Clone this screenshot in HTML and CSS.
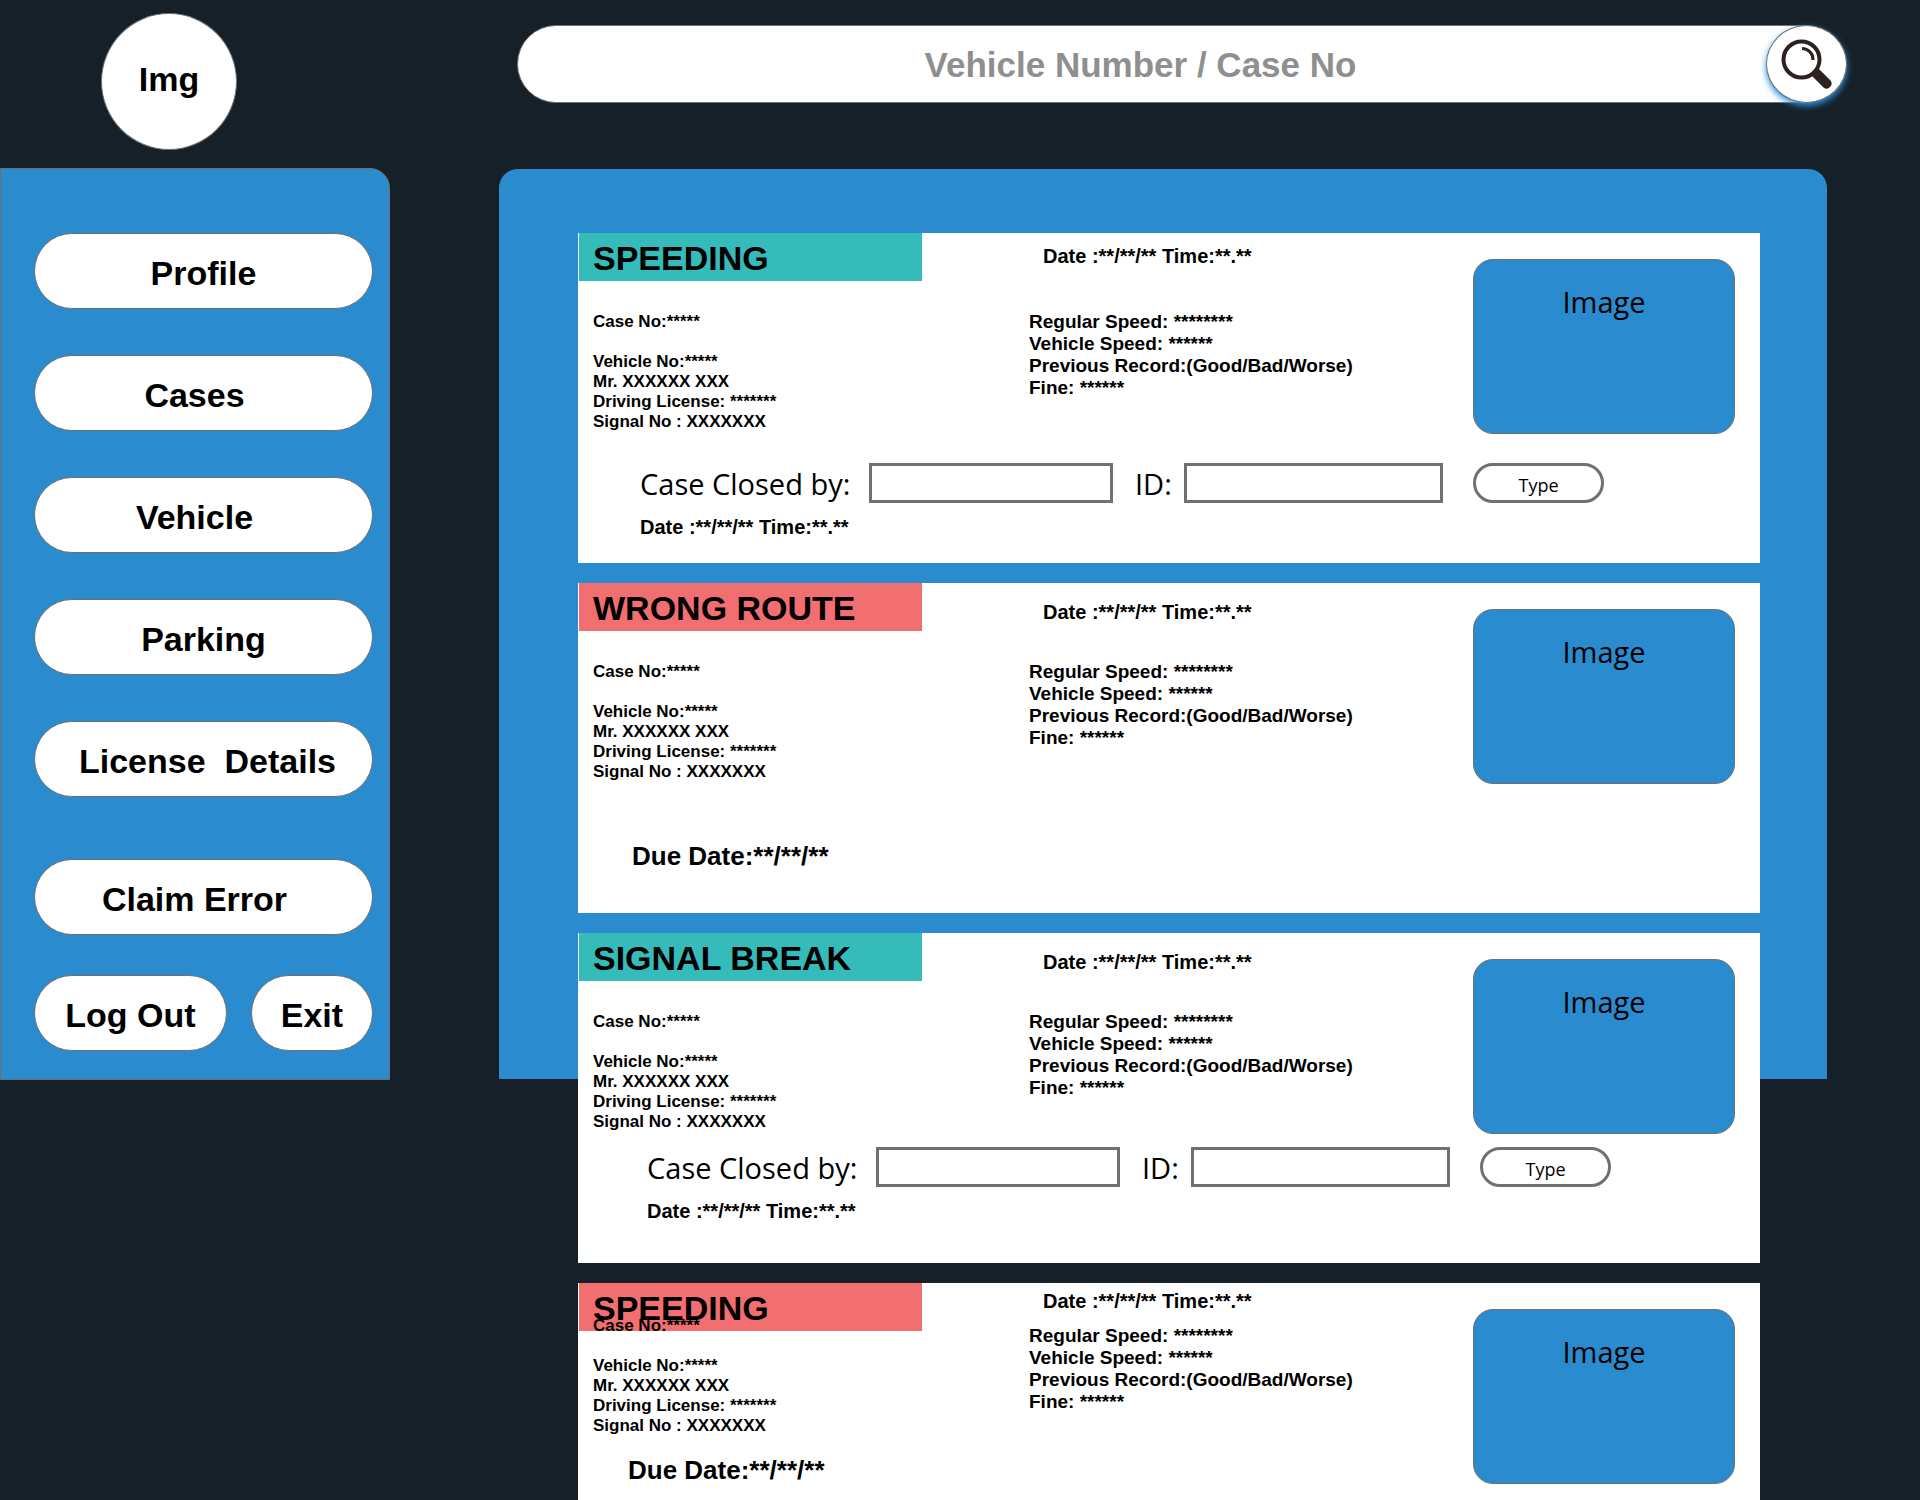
FILE: index.html
```html
<!DOCTYPE html>
<html lang="en">
<head>
<meta charset="utf-8">
<meta name="viewport" content="width=device-width, initial-scale=1">
<title>Traffic Cases</title>
<link rel="stylesheet" href="styles.css">
</head>
<body>
<div class="page">
  <header class="header">
    <div class="avatar">Img</div>
    <form class="search" role="search">
      <input class="search-input" type="search" aria-label="Vehicle Number / Case No" placeholder="Vehicle Number / Case No">
      <button class="search-button" type="button" aria-label="Search">
        <svg class="search-icon" viewBox="0 0 54 54" aria-hidden="true">
          <circle cx="21.500" cy="22.500" r="18" fill="none" stroke="#2d221f" stroke-width="4"/>
          <path d="M22 11.500A11 11 0 0 1 33 23" fill="none" stroke="#2d221f" stroke-width="3"/>
          <path d="M31 38 L38 31 L50.500 43.500 A5 5 0 0 1 43.500 50.500 Z" fill="#2d221f"/>
        </svg>
      </button>
    </form>
  </header>

  <div class="layout">
    <nav class="sidebar" aria-label="Main">
      <button class="pill" type="button">Profile</button>
      <button class="pill pill-left" type="button">Cases</button>
      <button class="pill pill-left" type="button">Vehicle</button>
      <button class="pill" type="button">Parking</button>
      <button class="pill pill-right" type="button">License&nbsp; Details</button>
      <div class="sidebar-foot">
        <button class="pill pill-left" type="button">Claim Error</button>
        <div class="pill-row">
          <button class="pill pill-wide" type="button">Log Out</button>
          <button class="pill pill-narrow" type="button">Exit</button>
        </div>
      </div>
    </nav>

    <main class="panel">
      <article class="card">
        <div class="case">
          <h2 class="tag tag-closed">SPEEDING</h2>
          <div class="details">
            <p class="case-no">Case No:*****</p>
            <p>Vehicle No:*****</p>
            <p>Mr. XXXXXX XXX</p>
            <p>Driving License: *******</p>
            <p>Signal No : XXXXXXX</p>
          </div>
        </div>
        <div class="record">
          <p class="stamp">Date :**/**/** Time:**.**</p>
          <div class="speeds">
            <p>Regular Speed: ********</p>
            <p>Vehicle Speed: ******</p>
            <p>Previous Record:(Good/Bad/Worse)</p>
            <p>Fine: ******</p>
          </div>
        </div>
        <div class="photo">Image</div>
        <div class="closing">
          <label class="field-label" for="closed-by-1">Case Closed by:</label>
          <input class="field" id="closed-by-1" type="text">
          <label class="field-label field-label-id" for="closed-id-1">ID:</label>
          <input class="field" id="closed-id-1" type="text">
          <button class="type" type="button">Type</button>
          <p class="closing-date">Date :**/**/** Time:**.**</p>
        </div>
      </article>

      <article class="card card-low-stamp">
        <div class="case">
          <h2 class="tag tag-open">WRONG ROUTE</h2>
          <div class="details">
            <p class="case-no">Case No:*****</p>
            <p>Vehicle No:*****</p>
            <p>Mr. XXXXXX XXX</p>
            <p>Driving License: *******</p>
            <p>Signal No : XXXXXXX</p>
          </div>
        </div>
        <div class="record">
          <p class="stamp">Date :**/**/** Time:**.**</p>
          <div class="speeds">
            <p>Regular Speed: ********</p>
            <p>Vehicle Speed: ******</p>
            <p>Previous Record:(Good/Bad/Worse)</p>
            <p>Fine: ******</p>
          </div>
        </div>
        <div class="photo">Image</div>
        <p class="due">Due Date:**/**/**</p>
      </article>

      <article class="card card-low-stamp">
        <div class="case">
          <h2 class="tag tag-closed">SIGNAL BREAK</h2>
          <div class="details">
            <p class="case-no">Case No:*****</p>
            <p>Vehicle No:*****</p>
            <p>Mr. XXXXXX XXX</p>
            <p>Driving License: *******</p>
            <p>Signal No : XXXXXXX</p>
          </div>
        </div>
        <div class="record">
          <p class="stamp">Date :**/**/** Time:**.**</p>
          <div class="speeds">
            <p>Regular Speed: ********</p>
            <p>Vehicle Speed: ******</p>
            <p>Previous Record:(Good/Bad/Worse)</p>
            <p>Fine: ******</p>
          </div>
        </div>
        <div class="photo">Image</div>
        <div class="closing closing-tight">
          <label class="field-label" for="closed-by-2">Case Closed by:</label>
          <input class="field" id="closed-by-2" type="text">
          <label class="field-label field-label-id" for="closed-id-2">ID:</label>
          <input class="field" id="closed-id-2" type="text">
          <button class="type" type="button">Type</button>
          <p class="closing-date">Date :**/**/** Time:**.**</p>
        </div>
      </article>

      <article class="card card-compact">
        <div class="case">
          <h2 class="tag tag-open">SPEEDING</h2>
          <div class="details">
            <p class="case-no">Case No:*****</p>
            <p>Vehicle No:*****</p>
            <p>Mr. XXXXXX XXX</p>
            <p>Driving License: *******</p>
            <p>Signal No : XXXXXXX</p>
          </div>
        </div>
        <div class="record">
          <p class="stamp">Date :**/**/** Time:**.**</p>
          <div class="speeds">
            <p>Regular Speed: ********</p>
            <p>Vehicle Speed: ******</p>
            <p>Previous Record:(Good/Bad/Worse)</p>
            <p>Fine: ******</p>
          </div>
        </div>
        <div class="photo">Image</div>
        <p class="due">Due Date:**/**/**</p>
      </article>
    </main>
  </div>
</div>
</body>
</html>
```

FILE: styles.css
```css
:root {
  --ink: #162029;
  --blue: #2a8bcf;
  --teal: #36bbbb;
  --coral: #f26f71;
  --line: #707070;
  --rounded: "Arial Rounded MT Bold", "Liberation Sans", sans-serif;
  --plain: "Segoe UI", "Open Sans", "Noto Sans", sans-serif;
}

* {
  box-sizing: border-box;
}

body {
  margin: 0;
  background: var(--ink);
  color: #000;
  font-family: var(--rounded);
  font-weight: 700;
}

h2,
p {
  margin: 0;
}

button,
input {
  margin: 0;
  color: inherit;
  font: inherit;
}

.page {
  height: 100vh;
  overflow-y: auto;
  scrollbar-width: none;
}

/* Header */

.header {
  display: flex;
  align-items: flex-start;
  gap: 280px;
  height: 168px;
  padding: 13px 73px 0 101px;
}

.avatar {
  flex: none;
  width: 136px;
  height: 137px;
  padding-bottom: 4px;
  border: 1px solid var(--line);
  border-radius: 50%;
  background: #fff;
  display: grid;
  place-items: center;
  font-size: 34px;
}

.search {
  position: relative;
  flex: 1;
  height: 78px;
  margin-top: 12px;
  padding-right: 6px;
}

.search-input {
  display: block;
  width: 100%;
  height: 100%;
  padding: 2px 88px 0 36px;
  border: 1px solid var(--line);
  border-radius: 39px;
  background: #fff;
  font-size: 35px;
  text-align: center;
  appearance: none;
}

.search-input::placeholder {
  color: #8f8f8f;
  opacity: 1;
}

.search-button {
  position: absolute;
  top: 0;
  right: 0;
  width: 81px;
  height: 78px;
  padding: 0;
  border: 1px solid var(--line);
  border-radius: 50%;
  background: #fff;
  box-shadow: 0 3px 6px #2a92e0;
  display: grid;
  place-items: center;
}

.search-icon {
  width: 54px;
  height: 54px;
}

/* Sidebar and panel */

.layout {
  display: flex;
  gap: 108px;
  padding-right: 92px;
}

.sidebar {
  flex: none;
  width: 390px;
  display: flex;
  flex-direction: column;
  gap: 46px;
  padding: 64px 16px 28px 33px;
  border: 1px solid var(--line);
  border-radius: 0 20px 0 0;
  background: var(--blue);
}

.sidebar-foot {
  display: grid;
  gap: 40px;
  margin-top: 16px;
}

.pill {
  height: 76px;
  padding: 4px 0 0;
  border: 1px solid var(--line);
  border-radius: 38px;
  background: #fff;
  font-size: 34px;
  white-space: nowrap;
}

.pill-left {
  padding-right: 18px;
}

.pill-right {
  padding-left: 8px;
}

.pill-row {
  display: flex;
  gap: 24px;
}

.pill-wide {
  flex: 192;
}

.pill-narrow {
  flex: 121;
}

/* The panel takes its height from the sidebar; the cards run on below it. */
.panel {
  flex: 1;
  contain: size;
  display: flex;
  flex-direction: column;
  gap: 20px;
  padding: 64px 67px 0 79px;
  border: 1px solid #191d22;
  border-radius: 20px 20px 0 0;
  background: var(--blue);
}

/* Cards */

.card {
  flex: none;
  min-height: 330px;
  display: grid;
  grid-template-columns: 451fr 444fr 262px;
  grid-template-rows: auto 1fr;
  padding-right: 25px;
  background: #fff;
}

.tag {
  width: 344px;
  height: 48px;
  border-left: 1px solid #fff;
  padding: 5px 14px 0;
  font-size: 34px;
  line-height: 40px;
}

.tag-closed {
  background: var(--teal);
}

.tag-open {
  background: var(--coral);
}

.details {
  margin-top: 31px;
  padding-left: 15px;
  font-size: 17px;
  line-height: 20px;
}

.case-no {
  margin-bottom: 20px;
}

.record {
  display: grid;
  grid-template-rows: 78px auto;
  align-content: start;
}

.stamp,
.closing-date {
  font-size: 20px;
  line-height: 22px;
}

.stamp {
  padding: 12px 0 0 14px;
}

.card-low-stamp .stamp {
  padding-top: 18px;
}

.speeds {
  font-size: 19px;
  line-height: 22px;
}

.photo {
  grid-row: 1 / 3;
  grid-column: 3;
  align-self: start;
  height: 175px;
  margin-top: 26px;
  padding-top: 22px;
  border: 1px solid var(--line);
  border-radius: 20px;
  background: var(--blue);
  font: 400 29px/40px var(--plain);
  text-align: center;
}

.closing {
  grid-row: 2;
  grid-column: 1 / -1;
  display: grid;
  grid-template-columns: 229px 244px 71px 259px 131px;
  grid-template-rows: 40px auto;
  row-gap: 13px;
  align-content: start;
  padding: 31px 0 0 62px;
}

.closing-tight {
  padding: 15px 0 0 69px;
}

.field-label {
  font: 400 29px/42px var(--plain);
}

.field-label-id {
  padding-left: 22px;
}

.field {
  width: 100%;
  min-width: 0;
  padding: 0 8px;
  border: 3px solid var(--line);
  border-radius: 0;
  background: #fff;
  font: 400 18px/22px var(--plain);
}

.type {
  width: 131px;
  margin-left: 30px;
  padding: 3px 0 0;
  border: 3px solid var(--line);
  border-radius: 20px;
  background: #fff;
  font: 400 18px/22px var(--plain);
}

.closing-date {
  grid-column: 1 / -1;
}

.due {
  grid-row: 2;
  grid-column: 1 / 3;
  padding: 59px 0 0 54px;
  font-size: 26px;
  line-height: 30px;
}

/* Compact card: the details ride up over the tag */

.card-compact .details {
  margin-top: -15px;
}

.card-compact .record {
  grid-template-rows: 42px auto;
}

.card-compact .stamp {
  padding-top: 7px;
}

.card-compact .due {
  padding: 19px 0 0 50px;
}
```
